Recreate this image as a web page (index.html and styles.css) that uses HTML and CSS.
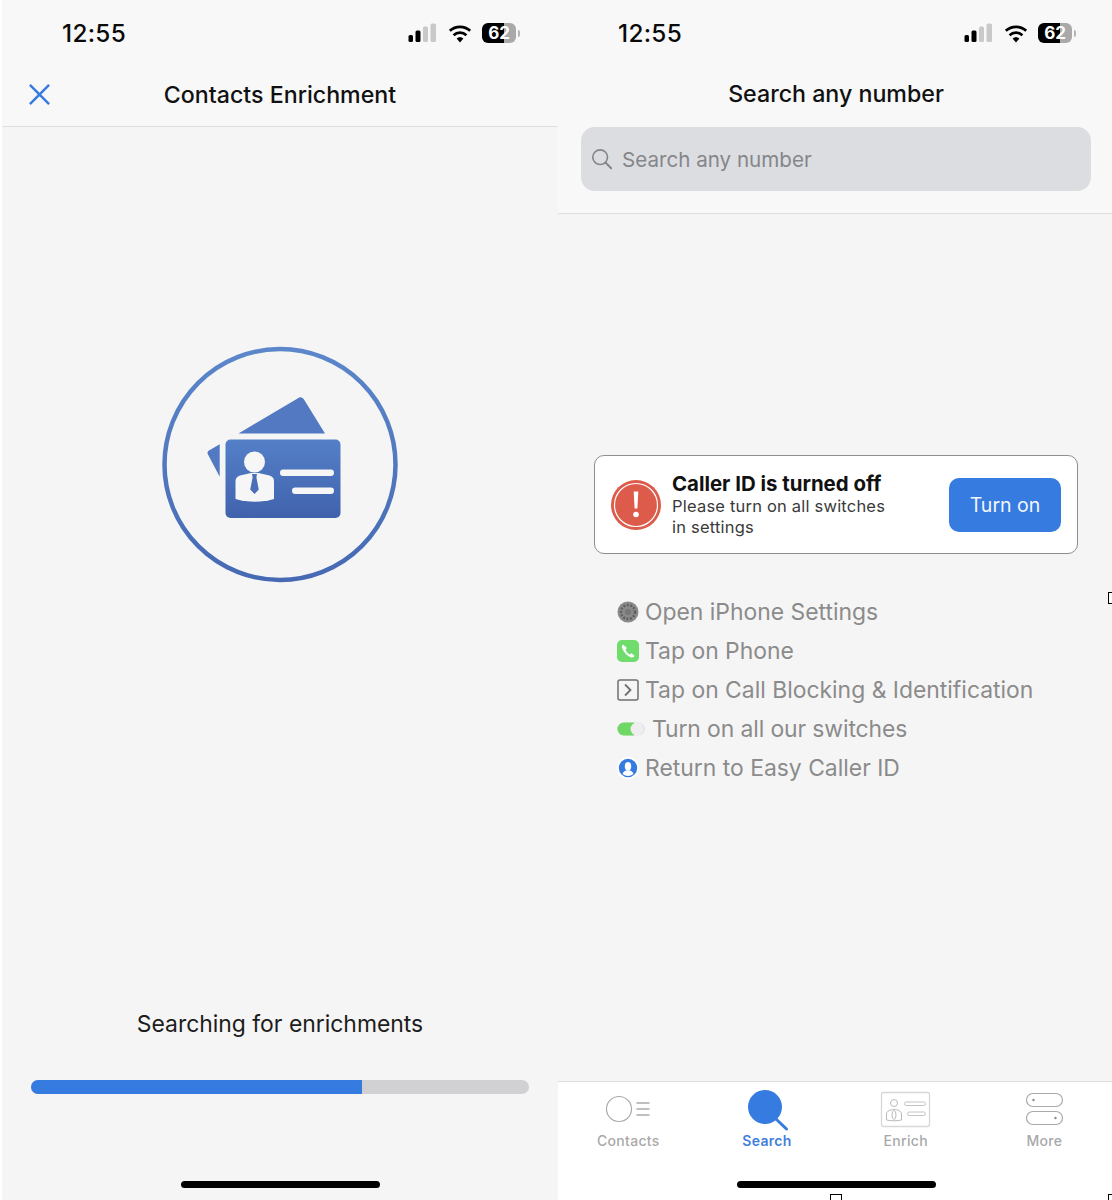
FILE: index.html
```html
<!DOCTYPE html>
<html lang="en">
<head>
<meta charset="utf-8">
<title>Easy Caller ID</title>
<link rel="stylesheet" href="styles.css">
</head>
<body>
<svg class="defs" width="0" height="0" aria-hidden="true">
  <defs>
    <symbol id="signal" viewBox="0 0 30 20">
      <rect x="0.5" y="12" width="4.5" height="7" rx="1.5" fill="#000"/>
      <rect x="7.5" y="7.5" width="5" height="11.5" rx="1.5" fill="#000"/>
      <rect x="15" y="3.5" width="5" height="15.5" rx="1.5" fill="#c9c9c9"/>
      <rect x="22.5" y="0.5" width="5.5" height="18.5" rx="1.5" fill="#c9c9c9"/>
    </symbol>
    <symbol id="wifi" viewBox="0 0 24 19">
      <path d="M12 18.5 8.6 14.6a5 5 0 0 1 6.8 0Z" fill="#000"/>
      <path d="M5.6 11.2a9.4 9.4 0 0 1 12.8 0" fill="none" stroke="#000" stroke-width="2.7"/>
      <path d="M1.8 6.8a15 15 0 0 1 20.4 0" fill="none" stroke="#000" stroke-width="2.7"/>
    </symbol>
  </defs>
</svg>
<main class="stage">
  <section class="phone phone-left">
    <header class="top">
      <div class="status">
        <span class="time">12:55</span>
        <div class="status-icons">
          <svg class="signal"><use href="#signal"/></svg>
          <svg class="wifi"><use href="#wifi"/></svg>
          <span class="battery">62</span><span class="nub"></span>
        </div>
      </div>
      <div class="nav nav-bordered">
        <svg class="close" viewBox="0 0 24 24"><path d="M2 2 22 22M22 2 2 22" fill="none" stroke="#367bdf" stroke-width="2.6"/></svg>
        <h1 class="title">Contacts Enrichment</h1>
      </div>
    </header>
    <div class="enrich-body">
      <svg class="logo" viewBox="0 0 260 260">
        <defs>
          <linearGradient id="blue" x1="0" y1="0" x2="0" y2="1">
            <stop offset="0" stop-color="#5480c8"/>
            <stop offset="1" stop-color="#4162ad"/>
          </linearGradient>
          <linearGradient id="ring" gradientUnits="userSpaceOnUse" x1="0" y1="12" x2="0" y2="248">
            <stop offset="0" stop-color="#5c87cb"/>
            <stop offset="1" stop-color="#4569b3"/>
          </linearGradient>
        </defs>
        <circle cx="130" cy="129.5" r="115.5" fill="none" stroke="url(#ring)" stroke-width="4.5"/>
        <path d="M88.5 98.5 148 63.2a4 4 0 0 1 6 1.4L175 98.5Z" fill="#5279c2"/>
        <path d="M69.7 109.3 59 115.5a3 3 0 0 0-1 4L69.7 141.7Z" fill="#5279c2"/>
        <rect x="75.5" y="104.5" width="115" height="78.500" rx="5" fill="url(#blue)"/>
        <circle cx="104.5" cy="127" r="10.5" fill="#f6f6f6"/>
        <path d="M85.5 147c0-4 1.500-5.500 4.500-6.500l11-2.500h7.500l11 2.500c3 1 4.500 2.500 4.500 6.500v17c-12 3.500-26 3.500-38.500 0Z" fill="#f6f6f6"/>
        <path d="M102 139h5l-.6 3.500 2.400 12-4.300 4.500-4.300-4.500 2.400-12Z" fill="#4a6fb8"/>
        <rect x="130" y="134.500" width="54" height="6.500" rx="3.200" fill="#f6f6f6"/>
        <rect x="142" y="152.500" width="42" height="6.500" rx="3.200" fill="#f6f6f6"/>
      </svg>
      <p class="searching">Searching for enrichments</p>
      <div class="progress"><div class="progress-fill" style="width: 66.4%"></div></div>
      <div class="home-wrap"><span class="home"></span></div>
    </div>
  </section>

  <section class="phone phone-right">
    <header class="top top-bordered">
      <div class="status">
        <span class="time">12:55</span>
        <div class="status-icons">
          <svg class="signal"><use href="#signal"/></svg>
          <svg class="wifi"><use href="#wifi"/></svg>
          <span class="battery">62</span><span class="nub"></span>
        </div>
      </div>
      <div class="nav nav-short">
        <h1 class="title">Search any number</h1>
      </div>
      <div class="search">
        <svg class="search-icon" viewBox="0 0 24 24"><circle cx="10" cy="10" r="8" fill="none" stroke="#85868a" stroke-width="1.800"/><path d="M16 16 22 22" stroke="#85868a" stroke-width="2.200" stroke-linecap="round"/></svg>
        <span class="placeholder">Search any number</span>
      </div>
    </header>
    <div class="search-body">
      <div class="alert">
        <svg class="alert-icon" viewBox="0 0 50 50">
          <circle cx="25" cy="25" r="25" fill="#dc5b4a"/>
          <circle cx="25" cy="25" r="21.500" fill="none" stroke="#fff" stroke-width="1.200"/>
          <path d="M22.700 11.500h4.600l-.9 17h-2.800Z" fill="#fff"/>
          <circle cx="25" cy="34.500" r="2.800" fill="#fff"/>
        </svg>
        <div class="alert-text">
          <strong class="alert-title">Caller ID is turned off</strong>
          <span class="alert-sub">Please turn on all switches<br>in settings</span>
        </div>
        <button class="turn-on" type="button">Turn on</button>
      </div>
      <ul class="steps">
        <li class="step">
          <svg class="step-icon" viewBox="0 0 22 22"><circle cx="11" cy="11" r="10.500" fill="#8a8a8a"/><circle cx="11" cy="11" r="7" fill="none" stroke="#5f5f5f" stroke-width="2.500" stroke-dasharray="2 1.500"/><circle cx="11" cy="11" r="3" fill="#777"/></svg>
          <span>Open iPhone Settings</span>
        </li>
        <li class="step">
          <svg class="step-icon" viewBox="0 0 22 22"><rect width="22" height="22" rx="5" fill="#6fdc6b"/><path d="M6 4.500c-1.500 1-1.500 3 0 5.500 2 3.500 4.500 6 7.500 7.200 2 .6 3.500 0 4-1.500l-3-2.500-1.700 1.300c-2-1-3.500-3-4.300-5l1.500-1.500Z" fill="#fff"/></svg>
          <span>Tap on Phone</span>
        </li>
        <li class="step">
          <svg class="step-icon" viewBox="0 0 22 22"><rect x="1" y="1" width="20" height="20" rx="2" fill="none" stroke="#6f6f6f" stroke-width="1.500"/><path d="M8 5.500 13.500 11 8 16.500" fill="none" stroke="#6f6f6f" stroke-width="1.800"/></svg>
          <span>Tap on Call Blocking &amp; Identification</span>
        </li>
        <li class="step step-switch">
          <svg class="switch-icon" viewBox="0 0 28 16"><rect y="1.500" width="28" height="13" rx="6.500" fill="#e4e4e6"/><path d="M7 1.500h10v13H7a6.500 6.500 0 0 1 0-13Z" fill="#6fd763"/><circle cx="20" cy="8" r="6.500" fill="#eeeef0"/></svg>
          <span>Turn on all our switches</span>
        </li>
        <li class="step">
          <svg class="step-icon" viewBox="0 0 22 22"><circle cx="11" cy="11" r="11" fill="#fff"/><circle cx="11" cy="11" r="9.200" fill="#367bdf"/><ellipse cx="11" cy="9.300" rx="3.200" ry="4.300" fill="#fff"/><path d="M5.500 17c.5-2.500 2.500-3 4-3.700h3c1.500.7 3.500 1.200 4 3.700a9 9 0 0 1-11 0Z" fill="#fff"/></svg>
          <span>Return to Easy Caller ID</span>
        </li>
      </ul>
    </div>
    <nav class="tabs">
      <div class="tab">
        <svg class="tab-icon" viewBox="0 0 60 44"><circle cx="21" cy="21" r="12.500" fill="none" stroke="#aaa" stroke-width="1.200"/><path d="M38.500 15h13M38.500 21h13M38.500 27h13" stroke="#aaa" stroke-width="1.300"/></svg>
        <span>Contacts</span>
      </div>
      <div class="tab tab-active">
        <svg class="tab-icon" viewBox="0 0 60 44"><circle cx="28" cy="19" r="17" fill="#367bdf"/><path d="M39 31 49.500 41" stroke="#367bdf" stroke-width="3" stroke-linecap="round"/></svg>
        <span>Search</span>
      </div>
      <div class="tab">
        <svg class="tab-icon" viewBox="0 0 60 44"><rect x="5.500" y="4.500" width="48" height="34" rx="2" fill="none" stroke="#d8d8d8" stroke-width="1.300"/><circle cx="18" cy="15" r="3.500" fill="none" stroke="#bbb" stroke-width="1"/><path d="M10.500 32v-6c0-3 4-4.500 7.500-4.500s7.500 1.500 7.500 4.500v6c-4 1-11 1-15 0Z" fill="none" stroke="#bbb" stroke-width="1"/><ellipse cx="18" cy="27" rx="2" ry="4.500" fill="none" stroke="#bbb" stroke-width="1"/><rect x="28.500" y="14" width="21" height="3.500" rx="1.700" fill="none" stroke="#c4c4c4" stroke-width="1"/><rect x="31.500" y="24" width="18" height="3.500" rx="1.700" fill="none" stroke="#c4c4c4" stroke-width="1"/></svg>
        <span>Enrich</span>
      </div>
      <div class="tab">
        <svg class="tab-icon" viewBox="0 0 60 44"><rect x="12.500" y="5.500" width="36" height="13" rx="6.500" fill="none" stroke="#aaa" stroke-width="1.200"/><rect x="12.500" y="23.500" width="36" height="13" rx="6.500" fill="none" stroke="#aaa" stroke-width="1.200"/><circle cx="19.500" cy="12" r="1.200" fill="#888"/><circle cx="41.500" cy="30" r="1.200" fill="#888"/></svg>
        <span>More</span>
      </div>
    </nav>
    <div class="home-wrap home-wrap-white"><span class="home"></span></div>
  </section>
  <span class="handle handle-bottom-mid"></span>
  <span class="handle handle-bottom-right"></span>
  <span class="handle handle-mid-right"></span>
</main>
</body>
</html>
```

FILE: styles.css
```css
* { box-sizing: border-box; }
html, body { margin: 0; padding: 0; background: #fff; }
body { font-family: Inter, "Liberation Sans", sans-serif; color: #111; }
.defs { position: absolute; }
.stage { position: relative; display: flex; height: 1200px; width: 1112px; overflow: hidden; padding-left: 2px; }
.phone { display: flex; flex-direction: column; height: 1200px; background: #f5f5f5; }
.phone-left { width: 556px; }
.phone-right { width: 554px; }

.top { background: #f8f8f8; }
.top-bordered { border-bottom: 1px solid #dedede; padding-bottom: 22px; }
.status { display: flex; align-items: center; justify-content: space-between; height: 66px; padding: 0 38px 0 60px; }
.phone-right .status { padding-right: 36px; }
.time { font-size: 24.300px; font-weight: 500; color: #0a0a0a; letter-spacing: 0.300px; }
.status-icons { display: flex; align-items: center; }
.signal { width: 30px; height: 20px; margin-right: 10px; }
.wifi { width: 24px; height: 19px; margin-right: 10px; }
.battery {
  display: block; width: 34px; height: 20px; border-radius: 6px;
  background: linear-gradient(to right, #000 0 64%, #a9a9a9 64%);
  color: #fff; font-size: 17px; font-weight: 700; line-height: 20px; text-align: center;
}
.nub { width: 2px; height: 7px; margin-left: 2px; border-radius: 0 2px 2px 0; background: #b5b5b5; }

.nav { position: relative; display: flex; align-items: center; justify-content: center; }
.nav-bordered { height: 61px; padding-bottom: 3px; border-bottom: 1px solid #dedede; }
.nav-short { height: 56px; padding-left: 2px; }
.title { margin: 0; font-size: 23.200px; font-weight: 500; color: #111; }
.close { position: absolute; left: 26px; top: 17px; width: 23px; height: 23px; }

.search { display: flex; align-items: center; height: 64px; margin: 5px 21px 0 23px; padding-left: 10px; border-radius: 14px; background: #dcdde1; }
.search-icon { width: 22px; height: 22px; margin-right: 9px; }
.placeholder { font-size: 20.600px; color: #85868a; }

.enrich-body { display: flex; flex: 1; flex-direction: column; align-items: center; background: #f5f5f5; }
.logo { width: 260px; height: 260px; margin-top: 208px; flex: none; }
.searching { margin: 414px 0 0; font-size: 22.900px; line-height: 30px; color: #1c1c1c; }
.progress { width: 498px; height: 14px; margin-top: 41px; border-radius: 7px; background: #d1d1d3; overflow: hidden; }
.progress-fill { height: 100%; background: #367bdf; }

.home-wrap { display: flex; justify-content: center; align-items: flex-start; width: 100%; margin-top: auto; height: 19px; }
.home-wrap-white { margin-top: 0; padding-left: 2px; background: #fff; }
.home { display: block; width: 199px; height: 7px; border-radius: 4px; background: #000; }

.search-body { flex: 1; background: #f5f5f5; }
.alert { display: flex; align-items: center; height: 99px; margin: 241px 34px 0 36px; padding: 0 16px 0 16px; border: 1px solid #8e8e8e; border-radius: 10px; background: #fff; }
.alert-icon { width: 50px; height: 50px; flex: none; margin-right: 11px; }
.alert-text { display: flex; flex-direction: column; flex: 1; }
.alert-title { font-size: 20.400px; font-weight: 700; line-height: 24px; color: #111; }
.alert-sub { font-size: 16.500px; line-height: 20.500px; color: #3a3a3a; letter-spacing: 0.200px; }
.turn-on { width: 112px; height: 54px; padding: 0; border: 0; border-radius: 10px; background: #367bdf; color: #f2f6fd; font: 400 19.500px Inter, "Liberation Sans", sans-serif; }

.steps { margin: 39px 0 0; padding: 0 0 0 59px; list-style: none; }
.step { display: flex; align-items: center; gap: 6px; height: 38.900px; font-size: 22.900px; color: #8b8b8b; white-space: nowrap; }
.step-icon { width: 22px; height: 22px; flex: none; }
.step-switch { gap: 7px; letter-spacing: -0.100px; }
.switch-icon { width: 28px; height: 16px; flex: none; }

.tabs { display: grid; grid-template-columns: repeat(4, 138.700px); height: 100px; padding: 6px 0 0 1px; border-top: 1px solid #dedede; background: #fff; }
.tab { display: flex; flex-direction: column; align-items: center; font-size: 14px; font-weight: 500; color: #a9a9a9; letter-spacing: 0.300px; }
.tab-active { color: #3f80dd; font-weight: 600; }
.tab-icon { width: 60px; height: 44px; }

.handle { position: absolute; display: block; width: 12px; height: 12px; background: #fff; border: 1px solid #000; }
.handle-bottom-mid { left: 830px; top: 1194px; }
.handle-bottom-right { left: 1108px; top: 1194px; }
.handle-mid-right { left: 1108px; top: 592px; }
```
